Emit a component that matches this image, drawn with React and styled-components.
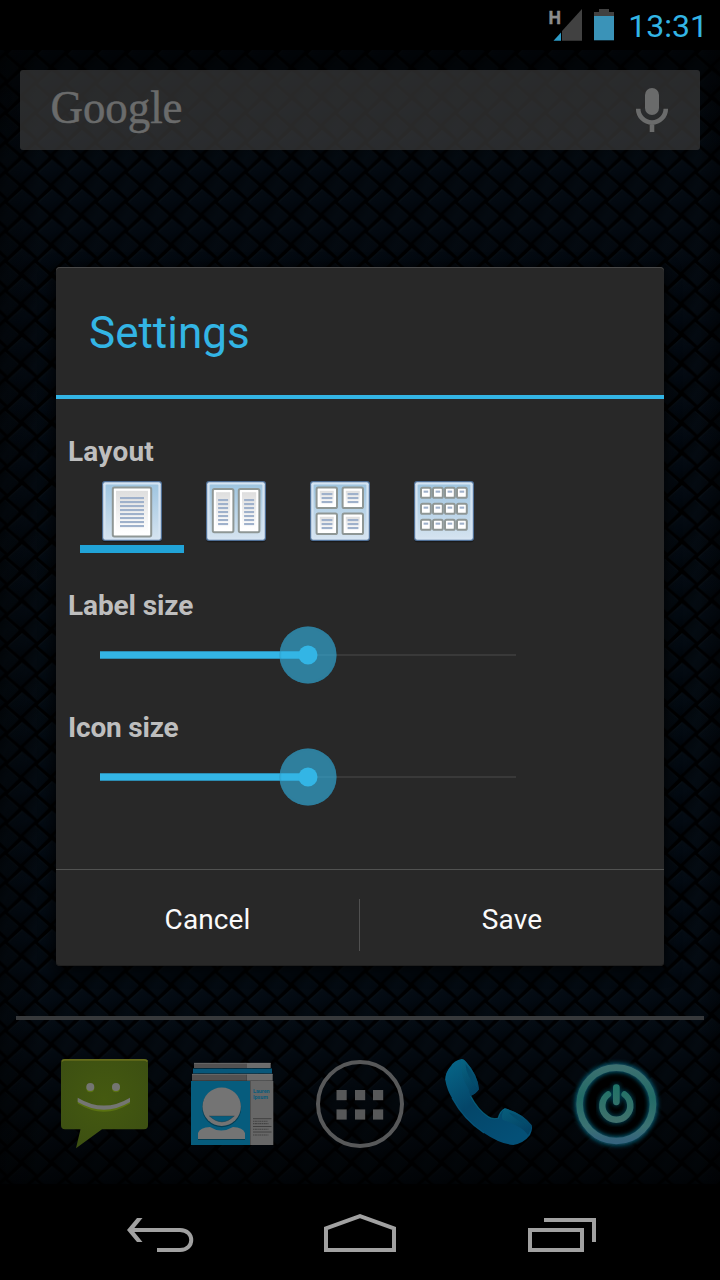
import React, { useState } from "react";
import styled, { createGlobalStyle } from "styled-components";

const GlobalStyle = createGlobalStyle`
  html, body { margin: 0; padding: 0; background: #000; }
  * { box-sizing: border-box; }
`;

const Screen = styled.div`
  position: relative;
  display: flex;
  flex-direction: column;
  width: 720px;
  height: 1280px;
  overflow: hidden;
  background: #000;
  font-family: Roboto, "Liberation Sans", sans-serif;
  svg { display: block; flex: none; }
`;

const StatusBar = styled.header`
  display: flex;
  justify-content: flex-end;
  align-items: center;
  height: 50px;
  padding-right: 12px;
  background: #000;
`;

const Clock = styled.time`
  margin-left: 12px;
  color: #33b5e5;
  font-size: 32px;
  line-height: 50px;
  padding-top: 1px;
`;

const Home = styled.main`
  position: relative;
  display: flex;
  flex-direction: column;
  height: 1136px;
  padding-top: 20px;
`;

const WallpaperLayer = styled.div`
  position: absolute;
  inset: 0;
`;

const SearchBar = styled.div`
  position: relative;
  display: flex;
  align-items: center;
  justify-content: space-between;
  height: 80px;
  margin: 0 20px;
  padding: 0 28px 0 24px;
  border-radius: 3px;
  background: rgba(64, 64, 64, 0.64);
`;

const DockDivider = styled.div`
  position: relative;
  height: 4px;
  margin: auto 16px 0;
  background: #37393b;
`;

const Dock = styled.nav`
  position: relative;
  display: flex;
  height: 166px;
  padding: 36px 40px 0;
`;

const DockItem = styled.div`
  display: flex;
  justify-content: center;
  width: 128px;
`;

const NavBar = styled.footer`
  display: flex;
  height: 94px;
  padding: 22px 60px 0;
  background: #000;
`;

const NavButton = styled.div`
  display: flex;
  justify-content: center;
  width: 200px;
`;

const Overlay = styled.div`
  position: absolute;
  inset: 0;
  display: flex;
  justify-content: center;
  align-items: flex-start;
  padding-top: 267px;
`;

const Dialog = styled.section`
  display: flex;
  flex-direction: column;
  width: 608px;
  height: 699px;
  border-radius: 4px;
  background: #282828;
  box-shadow: inset 0 1px 0 #484848, inset 0 -1px 0 #1f1f1f, 0 4px 14px 3px rgba(0, 0, 0, 0.7);
`;

const DialogTitle = styled.h1`
  height: 132px;
  margin: 0;
  padding-left: 33px;
  border-bottom: 4px solid #33b5e5;
  color: #33b5e5;
  font-size: 44px;
  font-weight: 400;
  line-height: 133px;
`;

const DialogBody = styled.div`
  flex: 1;
  padding: 37px 12px 0;
`;

const Label = styled.h2`
  margin: ${(p) => p.$gap || 0}px 0 0;
  color: #bebebe;
  font-size: 28px;
  font-weight: 700;
  line-height: 32px;
  letter-spacing: ${(p) => p.$track || 0}px;
`;

const Tabs = styled.div`
  display: flex;
  padding-left: 12px;
`;

const Tab = styled.button`
  display: flex;
  justify-content: center;
  width: 104px;
  height: 85px;
  padding: 11px 0 0;
  border: 0;
  border-bottom: 8px solid ${(p) => (p.$active ? "#21a3d7" : "transparent")};
  background: none;
`;

const SliderRow = styled.div`
  display: flex;
  align-items: center;
  height: 66px;
  padding-left: 32px;
`;

const Track = styled.div`
  position: relative;
  width: 416px;
  height: 2px;
  background: #393939;
`;

const Fill = styled.div`
  position: absolute;
  left: 0;
  top: -3px;
  height: 8px;
  background: #33b5e5;
  box-shadow: inset 0 1px 0 #2c8db3, inset 0 -1px 0 #2c8db3;
`;

const Thumb = styled.div`
  position: absolute;
  top: 1px;
  display: flex;
  align-items: center;
  justify-content: center;
  width: 57px;
  height: 57px;
  border-radius: 50%;
  transform: translate(-50%, -50%);
  background: rgba(51, 181, 229, 0.62);
  box-shadow: inset 0 0 2px #2a7ea0;

  &::after {
    content: "";
    width: 19px;
    height: 19px;
    border-radius: 50%;
    background: #33b5e5;
  }
`;

const Actions = styled.div`
  display: flex;
  height: 97px;
  border-top: 1px solid #515251;
`;

const Action = styled.button`
  width: ${(p) => p.$width}px;
  padding: 0;
  border: 0;
  background: none;
  color: #fafafa;
  font: 400 28px/100px Roboto, sans-serif;
  letter-spacing: 0.1px;
`;

const ActionDivider = styled.div`
  width: 1px;
  height: 52px;
  margin-top: 29px;
  background: #505050;
`;

function Wallpaper() {
  return (
    <svg width="720" height="1136">
      <defs>
        <linearGradient id="strapA" x1="0.2" y1="0" x2="0.7" y2="1">
          <stop offset="0" stopColor="#060d14" />
          <stop offset="0.5" stopColor="#030a12" />
          <stop offset="1" stopColor="#01050a" />
        </linearGradient>
        <linearGradient id="strapB" x1="0" y1="0.2" x2="1" y2="0.8">
          <stop offset="0" stopColor="#02060a" />
          <stop offset="0.5" stopColor="#040b12" />
          <stop offset="1" stopColor="#03080e" />
        </linearGradient>
        <g id="straps">
          <path d="M0.600 16 15 3 27.600 13.300 13.500 27Z" fill="url(#strapA)" />
          <path d="M1.400 15.800 15 3.500" stroke="#0c151d" strokeWidth="0.700" />
          <path d="M16.300 28.200 27.600 17.400 41.700 30 30.200 41.400Z" fill="url(#strapB)" />
          <path d="M28 18 41 29.600" stroke="#080f16" strokeWidth="0.700" />
        </g>
        <pattern id="weave" x="7.200" y="106.500" width="30" height="29.600" patternUnits="userSpaceOnUse">
          <use href="#straps" />
          <use href="#straps" x="-30" />
          <use href="#straps" y="-29.600" />
          <use href="#straps" x="-30" y="-29.600" />
        </pattern>
        <linearGradient id="shade" x1="0" y1="0" x2="0" y2="1">
          <stop offset="0" stopColor="#000" stopOpacity="0.6" />
          <stop offset="0.1" stopColor="#000" stopOpacity="0.1" />
          <stop offset="0.85" stopColor="#000" stopOpacity="0" />
          <stop offset="1" stopColor="#000" stopOpacity="0.6" />
        </linearGradient>
        <linearGradient id="sides">
          <stop offset="0" stopColor="#000" stopOpacity="0.35" />
          <stop offset="0.06" stopColor="#000" stopOpacity="0" />
          <stop offset="0.97" stopColor="#000" stopOpacity="0" />
          <stop offset="1" stopColor="#000" stopOpacity="0.3" />
        </linearGradient>
      </defs>
      <rect width="720" height="1136" fill="#000001" />
      <rect width="720" height="1134" fill="url(#weave)" />
      <rect width="720" height="1136" fill="url(#shade)" />
      <rect width="720" height="1136" fill="url(#sides)" />
    </svg>
  );
}

function StatusIcons() {
  return (
    <svg width="68" height="50" viewBox="548 0 68 50">
      <text x="548.4" y="23.500" fontSize="18.500" fontWeight="700" fill="#8c8c8c" stroke="#8c8c8c" strokeWidth="0.4" textLength="12.500" lengthAdjust="spacingAndGlyphs">H</text>
      <path d="M562 31 582 9V40.7H562Z" fill="#414141" />
      <path d="M553.5 40.7 561 32.5V40.7Z" fill="#2e9cc7" />
      <path d="M599 9H609V12H614V17H594V12H599Z" fill="#414141" />
      <rect x="594" y="16" width="20" height="24.3" fill="#3a93b8" />
    </svg>
  );
}

function GoogleLogo() {
  return (
    <svg width="150" height="80">
      <text x="6.500" y="53.300" fontFamily="'Liberation Serif', serif" fontSize="46" fill="#6a6b6b" stroke="#6a6b6b" strokeWidth="0.5" textLength="132" lengthAdjust="spacingAndGlyphs">
        Google
      </text>
    </svg>
  );
}

function Mic() {
  return (
    <svg width="40" height="80" viewBox="632 70 40 80">
      <rect x="645" y="88" width="14" height="27" rx="7" fill="#6a6b6b" />
      <path d="M638.2 108.7a13.8 13.8 0 0 0 27.6 0M652 122.5V132" fill="none" stroke="#6a6b6b" strokeWidth="4.6" />
    </svg>
  );
}

const layouts = [
  { name: "single", xs: [12.8], ys: [8.6], w: 38.4, h: 48.8, line: { dx: 7.2, dy: 10.4, w: 24, n: 8 } },
  { name: "columns", xs: [8.8, 34.8], ys: [10], w: 20.6, h: 43.2, line: { dx: 5.3, dy: 11, w: 10, n: 7 } },
  { name: "grid", xs: [8.6, 34.6], ys: [8.6, 34.6], w: 20.4, h: 20.4, line: { dx: 5, dy: 6.4, w: 10.8, n: 3 } },
  { name: "dense", xs: [9, 21, 33, 45], ys: [8.8, 24.8, 40.8], w: 9.8, h: 10, line: { dx: 2.6, dy: 3.8, w: 4.6, n: 1 } },
];

function LayoutIcon({ layout }) {
  const { xs, ys, w, h, line } = layout;
  return (
    <svg width="64" height="64">
      <defs>
        <linearGradient id="frame" x1="0" y1="0" x2="0" y2="1">
          <stop offset="0" stopColor="#9fc5e0" />
          <stop offset="1" stopColor="#d3e2ef" />
        </linearGradient>
        <linearGradient id="page" x1="0" y1="0" x2="0" y2="1">
          <stop offset="0" stopColor="#dedede" />
          <stop offset="0.7" stopColor="#f6f6f6" />
          <stop offset="1" stopColor="#fff" />
        </linearGradient>
      </defs>
      <rect x="2" y="3.2" width="60" height="60" rx="3.5" fill="#1a1a1a" />
      <rect x="2" y="2" width="60" height="60" rx="3" fill="#4f6f96" />
      <rect x="3.2" y="3.2" width="57.6" height="57.6" rx="2" fill="#d5e4f2" />
      <rect x="5.6" y="5.6" width="52.8" height="52.8" rx="1" fill="url(#frame)" />
      {ys.map((y) =>
        xs.map((x) => (
          <g key={`${x}-${y}`}>
            <rect x={x} y={y} width={w} height={h} rx="1.6" fill="#fff" stroke="#8f9795" strokeWidth="2" />
            {line.n > 1 && <rect x={x + 3.2} y={y + 3.2} width={w - 6.4} height={h - 6.4} fill="url(#page)" />}
            {Array.from({ length: line.n }, (_, i) => (
              <rect key={i} x={x + line.dx} y={y + line.dy - 1 + i * 4} width={line.w} height="2.1" fill="#9fb1cb" />
            ))}
          </g>
        ))
      )}
    </svg>
  );
}

function MessagingIcon() {
  return (
    <svg width="96" height="96">
      <defs>
        <radialGradient id="bubble" cx="0.5" cy="0.45" r="0.65">
          <stop offset="0" stopColor="#455a10" />
          <stop offset="1" stopColor="#3c4f12" />
        </radialGradient>
      </defs>
      <path d="M9 3H88Q92 3 92 7V69Q92 73.3 88 73.3H46L20 92.3 24.5 73.3H9Q5 73.3 5 69V7Q5 3 9 3Z" fill="url(#bubble)" />
      <path d="M6 5.5Q6.5 3.8 9 3.8H88Q90.5 3.8 91.5 5.5" fill="none" stroke="#666c1b" strokeWidth="1.8" />
      <path d="M21.7 43Q48 61 74 43V47.5Q48 64 21.7 47.5Z" fill="#5b7311" />
      <circle cx="34.3" cy="32.2" r="4" fill="#5b7311" />
      <circle cx="60" cy="32.2" r="4" fill="#5b7311" />
      <circle cx="34.3" cy="31" r="4" fill="#747572" />
      <circle cx="60" cy="31" r="4" fill="#747572" />
      <path d="M21.7 41.7Q48 57.5 74 41.7V46Q48 61.5 21.7 46Z" fill="#747572" />
    </svg>
  );
}

function PeopleIcon() {
  return (
    <svg width="96" height="96">
      <path d="M10 7H63V12H10ZM8 18H62.7V24.7H8Z" fill="#535151" />
      <path d="M63 7H86.7V12H63ZM62.7 18H88.7V24.7H62.7Z" fill="#6c6c6c" />
      <rect x="9" y="12.5" width="79" height="5" fill="#07577a" />
      <path d="M10 7.3H86.7M8 18.3H88.7" stroke="#757575" strokeWidth="0.7" />
      <rect x="7" y="25" width="59" height="64" fill="#065c7d" />
      <rect x="66" y="25" width="23.3" height="64" fill="#676767" />
      <path d="M66.5 25V89" stroke="#515151" />
      <path d="M14 84V78Q16 72 26 71.5Q37 79 49 71.5Q59 72 61 78V84Z" fill="#053e54" />
      <circle cx="37.7" cy="51.7" r="19.5" fill="#053e54" />
      <path d="M14 83V77Q16 71.5 26 71Q37 78 49 71Q59 71.5 61 77V83Z" fill="#747474" />
      <circle cx="37.7" cy="50.7" r="19.2" fill="#747474" />
      <path d="M25.3 60H50.3Q38 72 25.3 60Z" fill="#065c7d" stroke="#303a3d" strokeWidth="0.4" />
      <g fill="#075c7d" fontSize="5.6" fontWeight="700">
        <text x="69" y="37" textLength="16.5" lengthAdjust="spacingAndGlyphs">Lauren</text>
        <text x="69" y="42.6" textLength="15" lengthAdjust="spacingAndGlyphs">Ipsum</text>
      </g>
      <path d="M69 62.7H87.5M69 70.5H87.5M69 76H87.5" stroke="#3c3c3c" strokeWidth="0.9" />
      <path d="M69 65.3H83.5M69 67.6H84.5M69 73.3H84.5M69 79H84.5" stroke="#434343" strokeWidth="1.1" strokeDasharray="1.4 0.5 2 0.5" />
    </svg>
  );
}

function AppsIcon() {
  return (
    <svg width="96" height="96">
      <circle cx="48" cy="48" r="42" fill="none" stroke="#575859" strokeWidth="4" />
      {[24.5, 43, 61].map((x) =>
        [34, 53.4].map((y) => <rect key={`${x}-${y}`} x={x} y={y} width="10.2" height="10.2" fill="#575859" />)
      )}
    </svg>
  );
}

function PhoneIcon() {
  return (
    <svg width="96" height="96">
      <defs>
        <linearGradient id="handset" x1="0" y1="0" x2="0.7" y2="1">
          <stop offset="0" stopColor="#07688a" />
          <stop offset="0.5" stopColor="#044669" />
          <stop offset="1" stopColor="#045077" />
        </linearGradient>
        <linearGradient id="ear" x1="0" y1="0" x2="0.5" y2="1">
          <stop offset="0" stopColor="#086782" />
          <stop offset="1" stopColor="#033e5f" />
        </linearGradient>
      </defs>
      <path d="M21.7 3Q14 4.5 11 10Q5 17 5.3 24Q7 34 12 42Q24 64 44 77Q60 88 73.3 89Q84 87 90 79Q93 73 91.5 69Q82 57 65 52.3Q60 55 58.3 62Q53 64 48 60.5Q38 54 30.7 40Q36 38 39 33.3Q38 19 26 5.7Q24 3 21.7 3Z" fill="url(#handset)" />
      <path d="M21.7 3Q24 3 26 5.7Q38 19 39 33.3Q35 38 30.7 40Q29 37 29 34Q19 19 21.7 3Z" fill="url(#ear)" opacity="0.6" />
      <path d="M65 52.3Q82 57 91.5 69Q92 74 88 79Q83 71 63 64Q60 60 65 52.3Z" fill="url(#ear)" opacity="0.7" />
      <path d="M30.7 40Q38 54 48 60.5Q53 64 58.3 62Q60 55 65 52.8" fill="none" stroke="#087997" strokeWidth="1.2" opacity="0.6" />
      <path d="M11 11Q6 17 6 24M12 42Q24 64 44 77" fill="none" stroke="#07628a" strokeWidth="1.2" opacity="0.7" />
      <path d="M25.5 8Q36 20 37.5 32Q26 20 25.5 8ZM69 56.5Q82 60 89 69Q76 65 69 56.5Z" fill="#044c6c" />
    </svg>
  );
}

function PowerIcon() {
  return (
    <svg width="96" height="96">
      <defs>
        <linearGradient id="ring" x1="0" y1="0" x2="0" y2="1">
          <stop offset="0" stopColor="#3c7070" />
          <stop offset="0.4" stopColor="#226b66" />
          <stop offset="0.8" stopColor="#3b7272" />
          <stop offset="1" stopColor="#35637d" />
        </linearGradient>
        <linearGradient id="symbol" gradientUnits="userSpaceOnUse" x1="0" y1="30" x2="0" y2="67">
          <stop offset="0" stopColor="#207267" />
          <stop offset="1" stopColor="#42706c" />
        </linearGradient>
        <filter id="glow" x="-20%" y="-20%" width="140%" height="140%">
          <feGaussianBlur stdDeviation="1.9" />
        </filter>
      </defs>
      <circle cx="48.3" cy="48.3" r="37" fill="#000" />
      <circle cx="48.3" cy="48.3" r="36.8" fill="none" stroke="#07566d" strokeWidth="9.5" filter="url(#glow)" />
      <path d="M40 38.5A14 14 0 1 0 56.6 38.5M48.3 32V45.5" fill="none" stroke="#06394a" strokeWidth="9" strokeLinecap="round" filter="url(#glow)" />
      <circle cx="48.3" cy="48.3" r="36.7" fill="none" stroke="url(#ring)" strokeWidth="6.6" />
      <path d="M40 38.5A14 14 0 1 0 56.6 38.5" fill="none" stroke="url(#symbol)" strokeWidth="6.4" strokeLinecap="round" />
      <rect x="45" y="28.2" width="6.7" height="21" rx="3.35" fill="url(#symbol)" />
    </svg>
  );
}

const navPaths = {
  back: (
    <>
      <path d="M17 10H22.5L12.7 22 22.5 34H17L7 22Z" fill="#a1a1a1" stroke="none" />
      <path d="M10 22H60C75 22 75 42 60 42H37" />
    </>
  ),
  home: <path d="M6 20.3 40 8.2 74 20.3V42H6Z" />,
  recents: <path d="M10 22H62V42H10ZM24 12H74V34" />,
};

function Slider({ value }) {
  return (
    <SliderRow>
      <Track>
        <Fill style={{ width: `${value}%` }} />
        <Thumb style={{ left: `${value}%` }} />
      </Track>
    </SliderRow>
  );
}

export default function App() {
  const [selected, setSelected] = useState("single");
  return (
    <Screen>
      <GlobalStyle />
      <StatusBar>
        <StatusIcons />
        <Clock>13:31</Clock>
      </StatusBar>
      <Home>
        <WallpaperLayer><Wallpaper /></WallpaperLayer>
        <SearchBar>
          <GoogleLogo />
          <Mic />
        </SearchBar>
        <DockDivider />
        <Dock>
          <DockItem><MessagingIcon /></DockItem>
          <DockItem><PeopleIcon /></DockItem>
          <DockItem><AppsIcon /></DockItem>
          <DockItem><PhoneIcon /></DockItem>
          <DockItem><PowerIcon /></DockItem>
        </Dock>
      </Home>
      <NavBar>
        {Object.entries(navPaths).map(([name, shape]) => (
          <NavButton key={name}>
            <svg width="80" height="48" fill="none" stroke="#a1a1a1" strokeWidth="4">
              {shape}
            </svg>
          </NavButton>
        ))}
      </NavBar>
      <Overlay>
        <Dialog>
          <DialogTitle>Settings</DialogTitle>
          <DialogBody>
            <Label $track={0.2}>Layout</Label>
            <Tabs>
              {layouts.map((l) => (
                <Tab key={l.name} $active={selected === l.name} onClick={() => setSelected(l.name)}>
                  <LayoutIcon layout={l} />
                </Tab>
              ))}
            </Tabs>
            <Label $gap={37} $track={-0.1}>Label size</Label>
            <Slider value={50} />
            <Label $gap={24} $track={-0.2}>Icon size</Label>
            <Slider value={50} />
          </DialogBody>
          <Actions>
            <Action $width={303}>Cancel</Action>
            <ActionDivider />
            <Action $width={304}>Save</Action>
          </Actions>
        </Dialog>
      </Overlay>
    </Screen>
  );
}
